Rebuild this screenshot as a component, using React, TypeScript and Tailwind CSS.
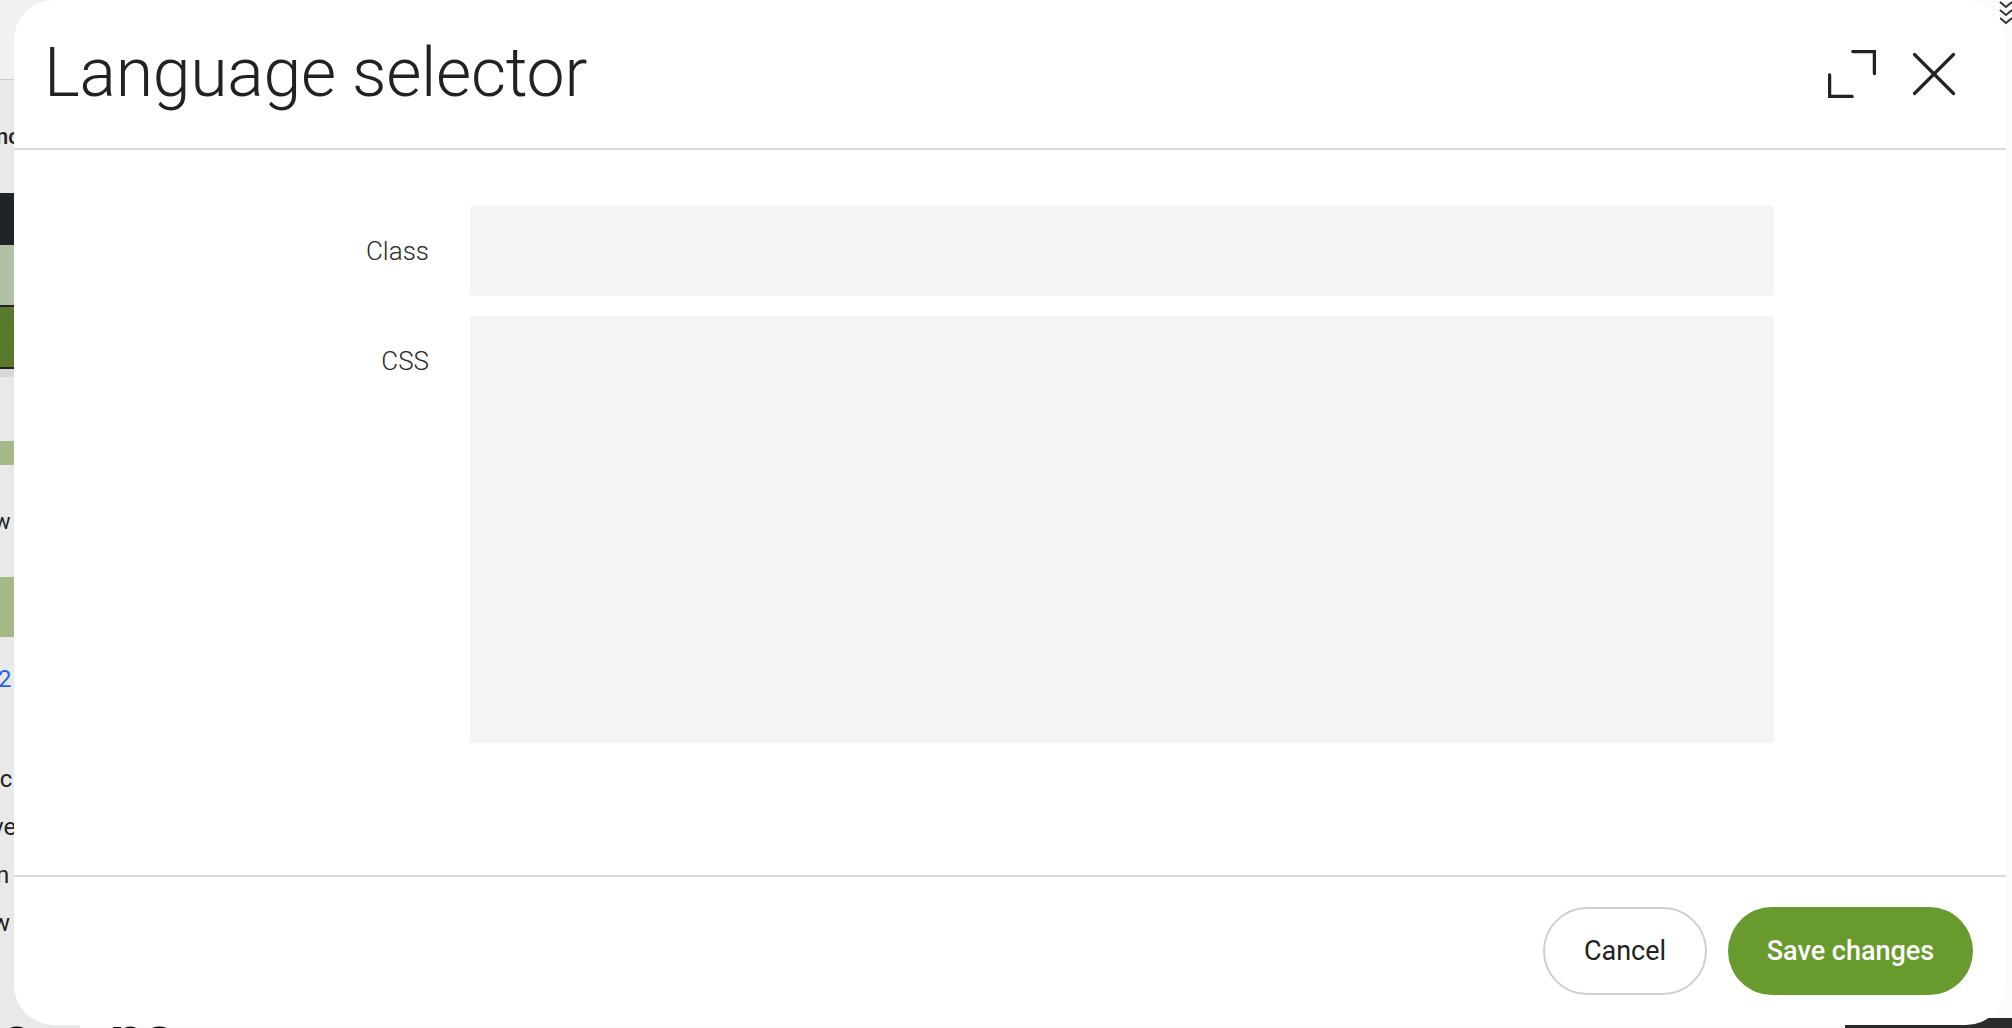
import React from 'react';

// Page behind the dialog: only a thin strip on the left shows through the overlay
const Backdrop: React.FC = () => (
  <div className="flex h-full w-full bg-[#fbfbfb]">
    <div className="flex h-full w-[80px] shrink-0 flex-col bg-[#e9e9e9]">
      <div className="h-[80px] shrink-0 border-b border-[#d0d0d0] bg-[#f1f1f1]" />
      <div className="flex h-[113px] shrink-0 items-center text-[22px] font-medium text-[#222]">
        <span className="-ml-[4px]">nc</span>
      </div>
      <div className="h-[52px] shrink-0 bg-[#1f2226]" />
      <div className="h-[60px] shrink-0 bg-[#b3c0a6]" />
      <div className="h-[2px] shrink-0 bg-[#1f2226]" />
      <div className="h-[60px] shrink-0 bg-[#587a2a]" />
      <div className="h-[2px] shrink-0 bg-[#1f2226]" />
      <div className="h-[8px] shrink-0 bg-[#d8d8d8]" />
      <div className="h-[64px] shrink-0" />
      <div className="h-[24px] shrink-0 bg-[#a4b985]" />
      <div className="flex h-[112px] shrink-0 items-center text-[22px] text-[#222]">
        <span className="-ml-[6px]">w</span>
      </div>
      <div className="h-[60px] shrink-0 bg-[#a4b985]" />
      <div className="flex h-[84px] shrink-0 items-center text-[24px] text-[#2563eb]">
        <span className="-ml-[2px]">2</span>
      </div>
      <div className="flex flex-col gap-[20px] pt-[44px] text-[24px] leading-[28px] text-[#222]">
        <span className="-ml-[6px]">lc</span>
        <span className="-ml-[8px]">ve</span>
        <span className="-ml-[4px]">n</span>
        <span className="-ml-[8px]">w</span>
      </div>
      <div className="flex flex-1 items-end">
        <span className="-mb-[40px] text-[60px] font-bold leading-none text-[#111]">o</span>
      </div>
    </div>
    <div className="flex flex-1 items-end justify-between">
      <span className="-mb-[40px] pl-[30px] text-[60px] font-bold leading-none text-[#111]">ns</span>
      <div className="h-[10px] w-[167px] bg-[#2b2b2b]" />
    </div>
  </div>
);

const ExpandIcon: React.FC = () => (
  <svg width="48" height="48" viewBox="0 0 48 48" fill="none" stroke="#222" strokeWidth="3.5" strokeLinecap="round" strokeLinejoin="miter">
    <path d="M1.5 25V46.5H24" />
    <path d="M25 1.5H46.5V23.5" />
  </svg>
);

const CloseIcon: React.FC = () => (
  <svg width="48" height="48" viewBox="0 0 48 48" fill="none" stroke="#222" strokeWidth="3.2" strokeLinecap="round">
    <path d="M4.5 4.5L43.5 43.5" />
    <path d="M43.5 4.5L4.5 43.5" />
  </svg>
);

const FormRow: React.FC<{ label: string; children: React.ReactNode }> = ({ label, children }) => (
  <div className="flex items-start gap-[41px]">
    <div className="w-[200px] pt-[28px] text-right text-[26px] font-light leading-[34px] text-[#2b2b2b]">
      {label}
    </div>
    {children}
  </div>
);

export default function App() {
  return (
    <div className="relative h-[1028px] w-[2012px] overflow-hidden font-['Roboto',sans-serif]">
      <Backdrop />

      {/* top-right bit of the page peeking out beside the dialog corner */}
      <svg className="absolute right-0 top-0" width="16" height="30" viewBox="0 0 16 30" fill="none" stroke="#333" strokeWidth="2">
        <path d="M4 2l6 5 6-5" />
        <path d="M4 10l6 5 6-5" />
        <path d="M4 18l6 5 6-5" />
      </svg>

      {/* Dialog */}
      <div className="absolute left-[14px] top-0 flex h-[1025px] w-[1992px] flex-col rounded-[40px] bg-white">
        {/* Header */}
        <div className="flex h-[148px] shrink-0 items-center justify-between pl-[30px] pr-[48px]">
          <h1 className="-mt-[3px] text-[68px] font-light leading-none tracking-[-0.3px] text-[#222]">
            Language selector
          </h1>
          <div className="flex items-center gap-[34px]">
            <button title="Expand" className="flex h-12 w-12 items-center justify-center">
              <ExpandIcon />
            </button>
            <button title="Close" className="flex h-12 w-12 items-center justify-center">
              <CloseIcon />
            </button>
          </div>
        </div>
        <div className="h-[2px] shrink-0 bg-[#d9d9d9]" />

        {/* Body */}
        <div className="flex flex-1 flex-col gap-[20px] pl-[215px] pt-[56px]">
          <FormRow label="Class">
            <div className="h-[90px] w-[1304px] rounded-[3px] bg-[#f4f4f4]" />
          </FormRow>
          <FormRow label="CSS">
            <div className="h-[427px] w-[1304px] rounded-[3px] bg-[#f4f4f4]" />
          </FormRow>
        </div>

        {/* Footer */}
        <div className="h-[2px] shrink-0 bg-[#d9d9d9]" />
        <div className="flex h-[148px] shrink-0 items-center justify-end gap-[21px] pr-[33px]">
          <button className="h-[88px] w-[164px] rounded-full border-2 border-[#cfcfcf] bg-white text-[27px] text-[#222]">
            Cancel
          </button>
          <button className="h-[88px] w-[245px] rounded-full bg-[#689a2d] text-[27px] font-medium text-white">
            Save changes
          </button>
        </div>
      </div>
    </div>
  );
}
